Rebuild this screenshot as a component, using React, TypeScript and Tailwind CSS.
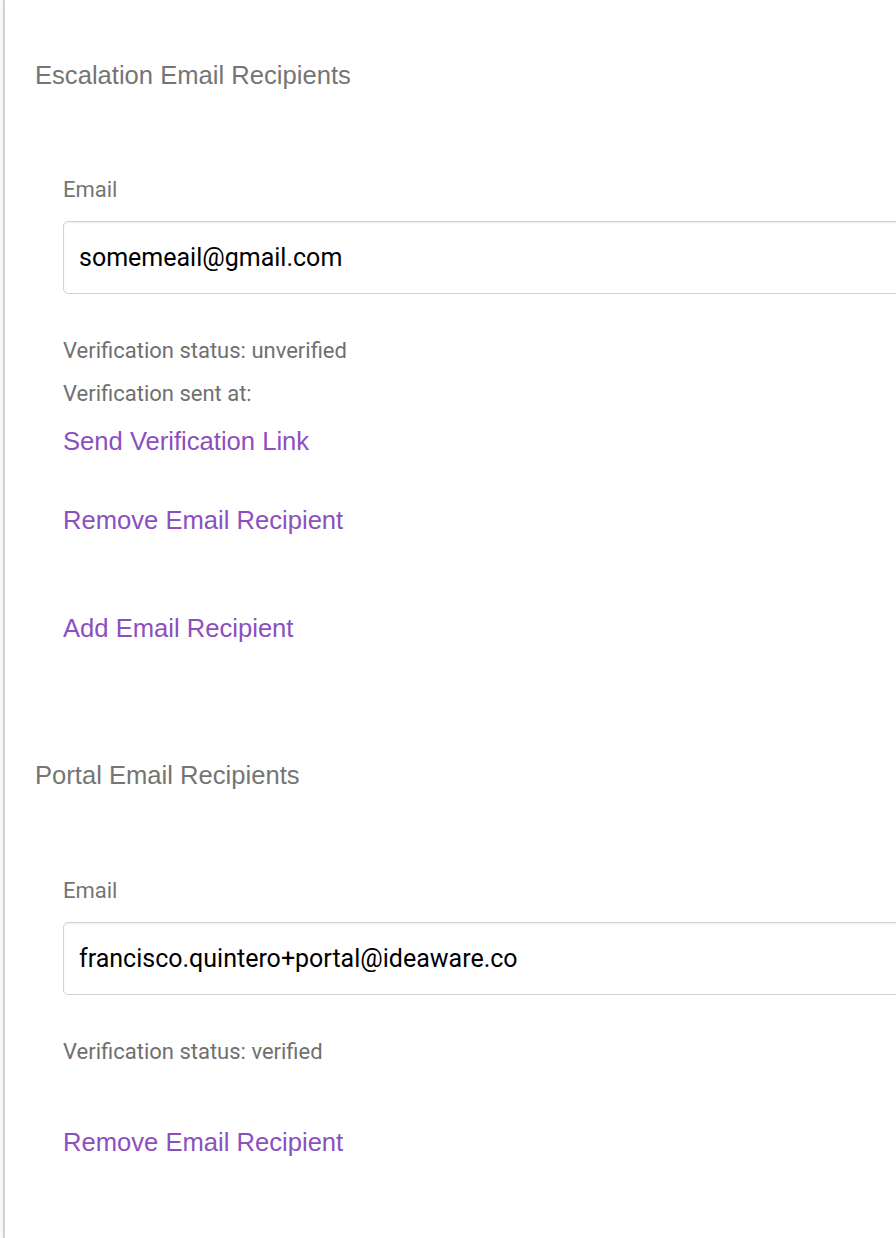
import React from 'react';

type Recipient = {
  email: string;
  status: string;
  sentAt?: boolean;
};

const link = "block font-['Liberation_Sans',Arial,sans-serif] text-[25.6px] leading-[32px] text-[#8c4fc0] text-left";
const heading = "pl-[30px] font-['Liberation_Sans',Arial,sans-serif] text-[25.6px] leading-[30px] font-normal text-[#757575]";
const note = "font-['Roboto','Liberation_Sans',sans-serif] text-[22px] leading-[28px] text-[#707070]";

const RecipientBlock: React.FC<{ r: Recipient }> = ({ r }) => {
  return (
    <div className="flex flex-col items-start pl-[58px]">
      <label className="font-['Roboto','Liberation_Sans',sans-serif] text-[22px] leading-[28px] text-[#757575]">
        Email
      </label>
      <input
        readOnly
        defaultValue={r.email}
        className="mt-[17px] block h-[73px] w-[900px] shrink-0 rounded-[5px] border border-[#d2d2d2] bg-white pl-[15px] font-['Roboto','Liberation_Sans',sans-serif] text-[25px] text-black outline-none shadow-[inset_0_1px_2px_rgba(0,0,0,0.07)]"
      />
      <div className={`mt-[43px] ${note}`}>Verification status: {r.status}</div>
      {r.sentAt && (
        <>
          <div className={`mt-[15px] ${note}`}>Verification sent at:</div>
          <button className={`mt-[17px] ${link}`}>Send Verification Link</button>
        </>
      )}
      <button className={`${r.sentAt ? 'mt-[47px]' : 'mt-[60px]'} ${link}`}>Remove Email Recipient</button>
    </div>
  );
};

const App: React.FC = () => {
  return (
    <div className="min-h-screen w-full overflow-hidden bg-white">
      <div className="ml-[3px] min-h-screen border-l-2 border-[#d3d3d3] pt-[60px] pb-[80px] shadow-[-2px_0_3px_rgba(0,0,0,0.06)]">
        <h2 className={heading}>Escalation Email Recipients</h2>
        <div className="mt-[86px]">
          <RecipientBlock r={{ email: 'somemeail@gmail.com', status: 'unverified', sentAt: true }} />
        </div>
        <button className={`ml-[58px] mt-[76px] ${link}`}>Add Email Recipient</button>

        <h2 className={`mt-[116px] ${heading}`}>Portal Email Recipients</h2>
        <div className="mt-[87px]">
          <RecipientBlock r={{ email: 'francisco.quintero+portal@ideaware.co', status: 'verified' }} />
        </div>
      </div>
    </div>
  );
};

export default App;
